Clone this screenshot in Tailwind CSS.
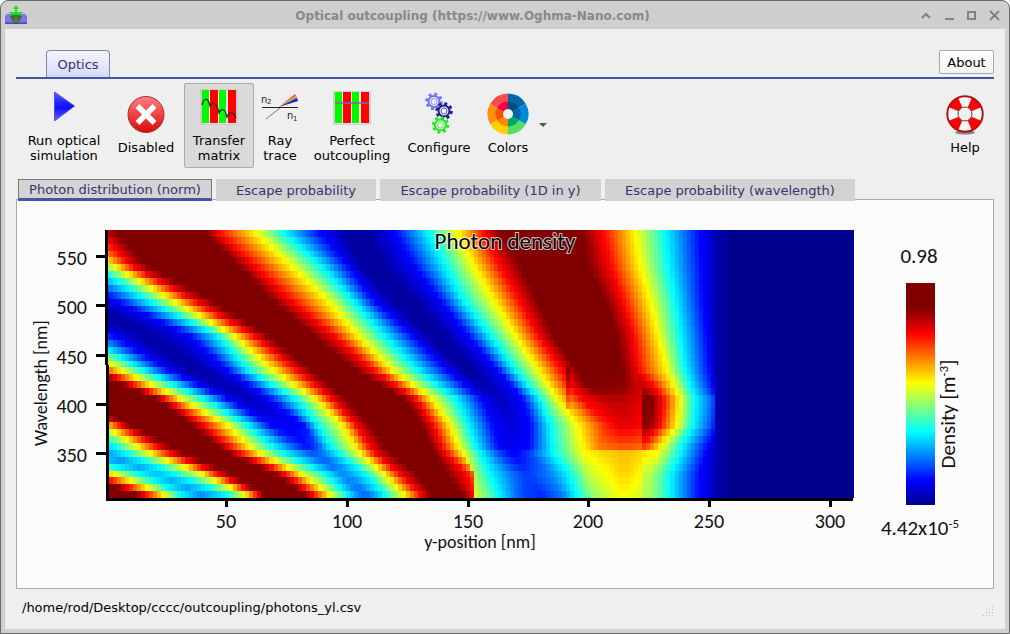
<!DOCTYPE html>
<html lang="en">
<head>
<meta charset="utf-8">
<title>Optical outcoupling</title>
<script src="https://cdn.jsdelivr.net/npm/@tailwindcss/browser@4"></script>
</head>
<body class="bg-white">
<div class="flex min-h-screen flex-col rounded-t-lg border border-[#6b6b6b] bg-[#cfcfcf] px-1 pb-1 font-['DejaVu_Sans',sans-serif] text-[13px] leading-[15px] text-black">
  <header class="flex h-7 items-center gap-2">
    <svg class="h-5 w-[22px]" viewBox="0 0 22 20" aria-hidden="true">
      <path d="M0 11l2-2h18l2 2v8H0z" fill="#7777dd"/><path d="M0 17.500h22V19H0z" fill="#4848a8"/>
      <path d="M6 11l5 7 5-7M7 11c0 7 8 7 8 0" fill="none" stroke="#a02050" stroke-width="1.500"/>
      <path d="M11 0l3 4h-2v3h7l-5 3h-6L3 7h7V4H8z" fill="#12e812"/>
      <path d="M7 10h8l-4 8z" fill="#187828"/><path d="M11 8v9M8 13l3 4 3-4" stroke="#12c812" fill="none"/>
    </svg>
    <h1 class="flex-1 pt-[2px] text-center text-[12px] font-bold text-[#888888]">Optical outcoupling (https://www.Oghma-Nano.com)</h1>
    <div class="flex gap-[7px] pr-[2px] text-[#828282]">
      <button aria-label="Roll up"><svg width="16" height="14" viewBox="0 0 16 14" fill="none" stroke="currentColor" stroke-width="2"><path d="M4 10l4-4 4 4"/></svg></button>
      <button aria-label="Minimize"><svg width="16" height="14" viewBox="0 0 16 14" fill="none" stroke="currentColor" stroke-width="2"><path d="M4 11h9"/></svg></button>
      <button aria-label="Maximize"><svg width="16" height="14" viewBox="0 0 16 14" fill="none" stroke="currentColor" stroke-width="2"><path d="M4 4h7v7H4z"/></svg></button>
      <button aria-label="Close"><svg width="16" height="14" viewBox="0 0 16 14" fill="none" stroke="currentColor" stroke-width="2"><path d="M3 3l9 9M12 3l-9 9"/></svg></button>
    </div>
  </header>

  <main class="flex flex-1 flex-col bg-[#efefef] px-[11px] pt-[21px]">
    <nav class="flex items-end border-b-2 border-[#4453a2]">
      <button class="ml-[30px] h-[27px] w-16 rounded-t border border-b-0 border-[#84849c] bg-linear-to-b from-[#f4f4ff] to-[#d6dafa] pt-px text-[#33336e]">Optics</button>
      <button class="mb-[3px] ml-auto h-6 w-[55px] rounded-xs border border-[#a9a9a9] bg-linear-to-b from-white to-[#f3f3f3]">About</button>
    </nav>

    <div class="flex items-start pt-1">
      <button class="flex h-[85px] w-24 flex-col items-center pt-[2px]">
        <svg width="48" height="44" viewBox="0 0 48 44" aria-hidden="true"><defs><linearGradient id="run" x1="0" y1="0" x2="0" y2="1"><stop offset="0" stop-color="#6666ff"/><stop offset=".35" stop-color="#2222ff"/><stop offset=".55" stop-color="#1010ff"/><stop offset="1" stop-color="#6868ff"/></linearGradient></defs><path d="M14.500 7l20 14-20 15z" fill="url(#run)" stroke="#3030e8" stroke-width=".7"/></svg>
        <span class="mt-1">Run optical<br>simulation</span>
      </button>
      <button class="flex h-[85px] w-[68px] flex-col items-center pt-[9px]">
        <svg width="44" height="44" viewBox="0 0 44 44" aria-hidden="true"><defs><linearGradient id="stop" x1="0" y1="0" x2="0" y2="1"><stop offset="0" stop-color="#ff8080"/><stop offset="1" stop-color="#d80808"/></linearGradient></defs><circle cx="22" cy="22.500" r="18" fill="url(#stop)" stroke="#a83030"/><path d="M13.500 14l17 17M30.500 14l-17 17" stroke="#fff" stroke-width="5.500"/></svg>
        <span class="mt-[4px]">Disabled</span>
      </button>
      <button class="ml-1 flex h-[85px] w-[70px] flex-col items-center rounded-xs border border-[#aaaaaa] bg-[#dadada] pt-[2px]">
        <svg width="40" height="44" viewBox="0 0 40 44" aria-hidden="true"><path d="M1 3h38v36H1z" fill="#ccc"/><path d="M3 4h34v34H3z" fill="#f4dede"/><path d="M3 4h7v33H3zM20 4h7v33h-7z" fill="#00fa00"/><path d="M11 4h8v33h-8zM29 4h8v33h-8z" fill="red"/><path d="M3 19c2-8 6-8 8 1 3-5 7-3 9 7 3-6 6-4 8 4 3-6 7-5 9 1" fill="none" stroke="#202820" stroke-width="1.200"/></svg>
        <span class="mt-[3px]">Transfer<br>matrix</span>
      </button>
      <button class="flex h-[85px] w-[52px] flex-col items-center pt-[2px]">
        <svg width="42" height="44" viewBox="0 0 42 44" aria-hidden="true"><path d="M7 34l14-11" stroke="#777"/><path d="M3 22.500h36" stroke="#222"/><path d="M20 22L36 9l1 2z" fill="#f44"/><path d="M20 22l17-11 1 1z" fill="#fa0"/><path d="M20 22l18-10v2z" fill="#2c4"/><path d="M20 22l18-9 1 3z" fill="#22d"/><g fill="#222" font-size="10" font-family="DejaVu Sans"><text x="2" y="18">n</text><text x="28" y="34">n</text><g font-size="7"><text x="8" y="19">2</text><text x="34" y="36">1</text></g></g></svg>
        <span class="mt-1">Ray<br>trace</span>
      </button>
      <button class="flex h-[85px] w-[92px] flex-col items-center pt-[2px]">
        <svg width="40" height="44" viewBox="0 0 40 44" aria-hidden="true"><path d="M1 6h38v34H1z" fill="#d0d0d0"/><path d="M3 7h34v32H3z" fill="#f4dede"/><path d="M3 7h7v31H3zM20 7h7v31h-7z" fill="#00fa00"/><path d="M11 7h8v31h-8zM29 7h8v31h-8z" fill="red"/><path d="M3 18h34" stroke="#7a6a9a" stroke-width="1.500"/></svg>
        <span class="mt-1">Perfect<br>outcoupling</span>
      </button>
      <button class="flex h-[85px] w-[82px] flex-col items-center pt-[9px]">
        <svg width="44" height="44" viewBox="0 0 44 44" fill="none" aria-hidden="true">
          <g stroke="#7070f0"><circle cx="17" cy="9.500" r="7.500" stroke-width="2.500" stroke-dasharray="3 2.900"/><circle cx="17" cy="9.500" r="5.500" stroke-width="2"/><circle cx="17" cy="9.500" r="3" stroke-width=".7"/></g>
          <g stroke="#181890"><circle cx="27" cy="19" r="7.500" stroke-width="2.500" stroke-dasharray="3 2.900"/><circle cx="27" cy="19" r="5.500" stroke-width="2"/><circle cx="27" cy="19" r="3" stroke-width=".7"/></g>
          <g stroke="#18f018"><circle cx="23.500" cy="33" r="7.500" stroke-width="2.500" stroke-dasharray="3 2.900"/><circle cx="23.500" cy="33" r="5.500" stroke-width="2"/><circle cx="23.500" cy="33" r="3" stroke-width=".7"/></g>
        </svg>
        <span class="mt-[4px]">Configure</span>
      </button>
      <button class="flex h-[85px] w-14 flex-col items-center pt-[9px]">
        <svg width="44" height="44" viewBox="-22 -22 44 44" aria-hidden="true">
          <path d="M0 0V-20.500A20.500 20.500 0 0 1 17.750-10.250z" fill="#0068a8"/><path d="M0 0L17.750-10.250A20.500 20.500 0 0 1 17.750 10.250z" fill="#0088d8"/><path d="M0 0L17.750 10.250A20.500 20.500 0 0 1 0 20.500z" fill="#55e065"/><path d="M0 0V20.500A20.500 20.500 0 0 1-17.750 10.250z" fill="#ffd000"/><path d="M0 0L-17.750 10.250A20.500 20.500 0 0 1-17.750-10.250z" fill="#ff9010"/><path d="M0 0L-17.750-10.250A20.500 20.500 0 0 1 0-20.500z" fill="#ff4850"/>
          <path d="M0 0V-12.500A12.500 12.500 0 0 1 10.800-6.250z" fill="#005080"/><path d="M0 0L10.800-6.250A12.500 12.500 0 0 1 10.800 6.250z" fill="#0068a8"/><path d="M0 0L10.800 6.250A12.500 12.500 0 0 1 0 12.500z" fill="#00a860"/><path d="M0 0V12.500A12.500 12.500 0 0 1-10.800 6.250z" fill="#ff8800"/><path d="M0 0L-10.800 6.250A12.500 12.500 0 0 1-10.800-6.250z" fill="#ff5000"/><path d="M0 0L-10.800-6.250A12.500 12.500 0 0 1 0-12.500z" fill="#ee0048"/><circle r="5" fill="#f0f0f0"/>
        </svg>
        <span class="mt-[4px]">Colors</span>
      </button>
      <button class="mt-10 ml-px flex w-3 justify-center" aria-label="More colors"><svg width="8" height="4" viewBox="0 0 8 4"><path d="M0 0h8L4 4z" fill="#555"/></svg></button>
      <button class="ml-auto flex h-[85px] w-[58px] flex-col items-center pt-[9px]">
        <svg width="44" height="44" viewBox="-22 -22 44 44" aria-hidden="true"><ellipse cy="18.500" rx="10" ry="2" fill="#888"/><circle r="12.500" fill="none" stroke="#f8f8f8" stroke-width="11"/><g fill="none" stroke="#fa0505" stroke-width="11"><path d="M4.800-11.500A12.500 12.500 0 0 1 11.500-4.800M11.500 4.800A12.500 12.500 0 0 1 4.800 11.500M-4.800 11.500A12.500 12.500 0 0 1-11.500 4.800M-11.500-4.800A12.500 12.500 0 0 1-4.800-11.500"/></g><circle r="17.500" fill="none" stroke="#d00" stroke-width="1.500"/><circle r="18.300" fill="none" stroke="#701010" stroke-width=".7"/><circle r="7" fill="#f0f0f0" stroke="#803030"/></svg>
        <span class="mt-[4px]">Help</span>
      </button>
    </div>

    <nav class="relative z-10 -mb-[2px] flex gap-1 pl-[2px] pt-[11px] text-[#34346e]">
      <button class="h-[22px] w-[194px] border border-b-3 border-[#777777] border-b-[#4453a2] bg-[#d4d4d4] leading-[17px]">Photon distribution (norm)</button>
      <button class="h-[22px] w-40 bg-[#d2d2d2]">Escape probability</button>
      <button class="h-[22px] w-[221px] bg-[#d2d2d2]">Escape probability (1D in y)</button>
      <button class="h-[22px] w-[250px] bg-[#d2d2d2]">Escape probability (wavelength)</button>
    </nav>
    <section class="border border-[#aaaaaa] bg-[#fcfcfc]">
      <svg class="block w-full" viewBox="17 200 976 388" font-family="Carlito, Lato, sans-serif" font-size="18" fill="#111" role="img" aria-label="Photon density by position and wavelength">
        <defs><linearGradient id="scale" x1="0" y1="1" x2="0" y2="0"><stop offset="0" stop-color="#00008f"/><stop offset=".11" stop-color="#00f"/><stop offset=".33" stop-color="#0ff"/><stop offset=".55" stop-color="#ff0"/><stop offset=".77" stop-color="#f00"/><stop offset=".885" stop-color="#800000"/><stop offset="1" stop-color="#800000"/></linearGradient></defs>
        <g id="heat" shape-rendering="crispEdges"></g>
        <path d="M105 230h3v135h-3zM106 365h3v136h-3zM107 498h746v3H107z" fill="#000"/>
        <g id="axes" font-size="20"></g>
        <text x="505" y="249" text-anchor="middle" font-size="23" stroke="#ffffff" stroke-opacity=".75" stroke-width="2" paint-order="stroke" fill="#000">Photon density</text>
        <text x="480" y="548" text-anchor="middle">y-position [nm]</text>
        <text transform="translate(47 383) rotate(-90)" text-anchor="middle">Wavelength [nm]</text>
        <path d="M906 283h29v222h-29z" fill="url(#scale)"/>
        <g font-size="21"><text x="919" y="263" text-anchor="middle">0.98</text>
        <text x="920" y="535" text-anchor="middle">4.42x10<tspan font-size="13" dy="-7">-5</tspan></text>
        <text transform="translate(955 414) rotate(-90)" text-anchor="middle">Density [m<tspan font-size="13" dy="-7">-3</tspan><tspan dy="7">]</tspan></text></g>
      </svg>
    </section>

    <footer class="flex flex-1 items-center justify-between pb-1 pl-[6px]">
      <span>/home/rod/Desktop/cccc/outcoupling/photons_yl.csv</span>
      <svg class="mt-2" width="13" height="13" viewBox="0 0 13 13" fill="#b8b8b8" aria-hidden="true"><path d="M11 1h1v1h-1zM8 4h1v1H8zM11 4h1v1h-1zM5 7h1v1H5zM8 7h1v1H8zM11 7h1v1h-1zM2 10h1v1H2zM5 10h1v1H5zM8 10h1v1H8zM11 10h1v1h-1z"/></svg>
    </footer>
  </main>
</div>
<script>
// Contour levels, left to right across the plot; 0 is the darkest blue, 8 the darkest red.
const levels = [8,5,3,2,3,5,7,8, 8,7,5,3,1,.25,.25,1,3,5,7,8, 8,7,5,5,3,1,.15,.15,1,3,5,7,8, 8,7.3,7.3,7.3,7,5,3,1,.5];
// Position of every contour at a given height: [y, xs, level overrides].
const rows = [
 [230,[-900,-880,-860,-840,-820,-800,-780,-760,-700,-680,-660,-240,-200,-150,-50,-20,20,60,98,114,203,215,253,253,281,318,347,367,393,427,457,483,498,582,595,595,595,602,635,665,700,714]],
 [265,[-700,-680,-660,-640,-620,-600,-580,-560,-500,-480,-460,-80,-20,10,30,52,92,112,130,145,238,253,290,290,320,348,360,383,413,445,473,500,520,588,603,603,603,610,640,668,702,714]],
 [300,[-500,-480,-460,-440,-420,-400,-380,-360,-90,-60,-30,0,30,65,88,114,147,172,193,210,272,290,327,327,352,373,393,415,440,463,493,520,537,605,618,618,618,622,650,675,703,714]],
 [335,[-300,-280,-260,-240,-220,-200,-180,-160,20,40,60,80,112,138,157,188,217,233,253,267,313,333,357,357,383,412,427,443,467,490,515,538,553,617,629,629,629,633,658,680,707,714]],
 [370,[-200,-180,-160,-140,-80,-40,-20,10,88,100,120,143,168,187,205,227,248,273,297,310,355,373,392,392,417,447,463,473,497,515,538,562,577,623,634,635,635,638,667,685,710,714]],
 [388,[-140,-120,-100,-80,-26,8,28,52,131,140,158,181,205,221,236,253,277,299,319,332,386,400,417,417,441,469,483,491,513,530,550,572,588,624,641,642,647,655,675,691,711,714],{13:.35,14:.35,26:.35,27:.35,33:7.9,34:7.3,35:7.7,36:7.4,40:1.2,41:.8}],
 [400,[-100,-80,-60,-40,10,40,60,80,160,167,183,207,230,245,255,270,297,317,333,347,407,417,433,433,457,483,497,503,523,540,558,583,608,625,641,642,653,663,680,695,712,714],{13:.45,14:.45,26:.5,27:.5,32:7.5,33:7.5,34:7.2,35:8.1,36:8,40:1.8,41:1.5}],
 [425,[-60,-30,0,60,85,104,120,130,192,203,227,247,270,284,290,303,317,342,356,370,422,433,450,450,468,493,508,514,530,550,577,605,620,630,641,642,651,660,677,693,710,714],{13:.9,14:.9,26:.7,27:.7,31:6.7,32:7.2,33:7.2,34:7,35:8,36:7.8,40:1.7,41:1.2}],
 [450,[0,30,60,92,120,143,163,177,223,233,253,277,300,308,312,320,333,357,372,387,433,443,460,460,477,500,510,516,528,553,583,600,620,630,641,642,646,650,659,680,706,714],{12:1.7,13:1.2,14:1.2,15:1.8,26:.9,27:.9,31:6,32:6.2,33:6.2,34:6.1,35:6.4,36:6.2,37:5.8}],
 [453,[5,35,66,100,126,149,170,184,229,239,259,283,303,311,317,325,338,360,375,390,435,446,463,463,480,500,510,517,530,553,585,600,620,630,641,642,645,648,657,680,706,714],{12:2,13:1.7,14:1.7,15:2.1,25:1.5,26:1,27:1,28:1.5,31:5.3,32:5.5,33:5.5,34:5.3,35:5.3,36:5.2,37:5.1}],
 [475,[85,117,143,160,177,205,220,233,277,287,303,327,340,343,348,352,367,385,401,417,447,467,474,474,490,515,525,530,550,570,587,595,620,628,641,642,646,650,655,670,700,714],{3:2.5,12:2.2,13:2.1,14:2.2,15:2.3,22:6.2,23:4.4,25:1.8,26:1.5,27:1.5,28:2,30:4.4,31:4.7,32:5.3,33:5.3,34:5,35:4.6,36:4.5,37:4.4,38:4.1}],
 [498,[145,172,187,208,235,252,264,269,309,317,334,350,362,366,370,374,387,407,424,434,466,473,474,474,500,518,525,545,565,577,590,600,620,628,641,642,646,650,655,670,700,714],{12:2,13:1.8,14:1.8,15:2,22:7,23:4.9,25:1.8,26:1.5,27:1.3,28:2,30:3.9,31:4.3,32:4.9,33:4.9,34:4.6,35:4.4,36:4.3,37:4.2,38:4}]
];
const stops = [[0,[0,0,143]],[1,[0,0,255]],[3,[0,255,255]],[5,[255,255,0]],[7,[255,0,0]],[8,[128,0,0]],[9,[128,0,0]]];
const mix = (a, b, t) => a + (b - a) * t;
function color(u) {
  u = Math.max(0, Math.min(8.9, u));
  let i = 0;
  while (u > stops[i + 1][0]) i++;
  const t = (u - stops[i][0]) / (stops[i + 1][0] - stops[i][0]);
  return "rgb(" + stops[i][1].map((c, k) => Math.round(mix(c, stops[i + 1][1][k], t))).join(",") + ")";
}
function level(x, y) {
  if (x > 714) return Math.max(0, .3 - (x - 714) / 60);
  let r = 0;
  while (r < rows.length - 2 && y > rows[r + 1][0]) r++;
  const a = rows[r], b = rows[r + 1], t = (y - a[0]) / (b[0] - a[0]);
  const xAt = i => mix(a[1][i], b[1][i], t);
  const uAt = i => mix(a[2]?.[i] ?? levels[i], b[2]?.[i] ?? levels[i], t);
  let i = levels.length - 2;
  while (i > 0 && xAt(i) > x) i--;
  const x0 = xAt(i), x1 = xAt(i + 1);
  let u = mix(uAt(i), uAt(i + 1), x1 > x0 ? Math.min(1, Math.max(0, (x - x0) / (x1 - x0))) : 1);
  if (x > 567 && x < 571 && y > 364 && y < 412) u += .5;
  return u;
}
const ns = "http://www.w3.org/2000/svg";
function add(parent, tag, attrs, text) {
  const e = document.createElementNS(ns, tag);
  for (const k in attrs) e.setAttribute(k, attrs[k]);
  if (text) e.textContent = text;
  parent.appendChild(e);
}
// Cells line up with the layer boundary at x = 474.
const heat = document.getElementById("heat"), ny = 39;
const edge = i => Math.max(107, Math.min(854, Math.round(474 + i * 4.01)));
for (let j = 0; j < ny; j++) {
  const y0 = Math.round(230 + j * 268 / ny), y1 = Math.round(230 + (j + 1) * 268 / ny);
  for (let i = -92; i < 95; i++) {
    const x0 = edge(i), x1 = edge(i + 1);
    add(heat, "rect", {x: x0, y: y0, width: x1 - x0, height: y1 - y0, fill: color(level((x0 + x1) / 2, (y0 + y1) / 2))});
  }
}
const axes = document.getElementById("axes");
[550, 500, 450, 400, 350].forEach((v, i) => {
  const y = Math.round(257 + i * 49.25);
  add(axes, "rect", {x: 96, y: y - 2, width: 10, height: 3, fill: "#000"});
  add(axes, "text", {x: 87, y: y + 8, "text-anchor": "end"}, v);
});
[50, 100, 150, 200, 250, 300].forEach((v, i) => {
  const x = Math.round(226 + i * 120.8);
  add(axes, "rect", {x: x - 1, y: 500, width: 3, height: 7, fill: "#000"});
  add(axes, "text", {x: x, y: 528, "text-anchor": "middle"}, v);
});
</script>
</body>
</html>
